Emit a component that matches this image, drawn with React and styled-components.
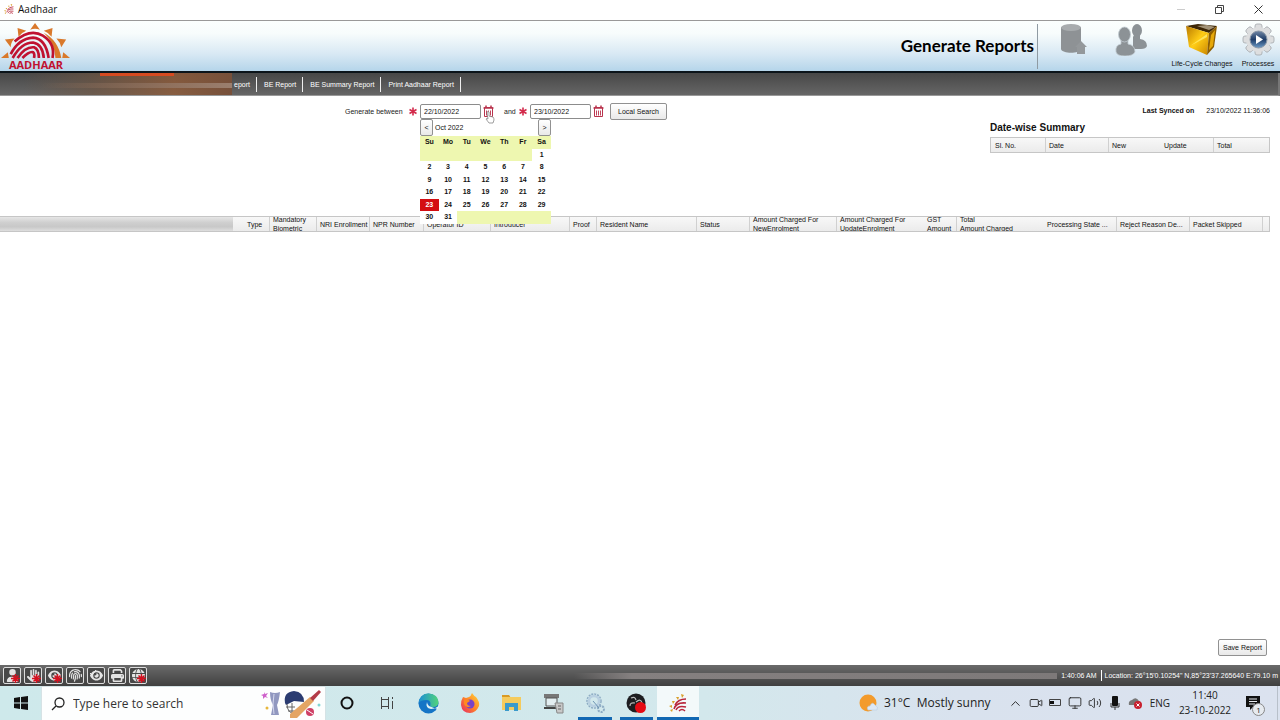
import React from "react";
import styled, { createGlobalStyle } from "styled-components";
import { Video, Monitor, Volume2, ChevronUp } from "lucide-react";
import {
  FaUser,
  FaHand,
  FaEye,
  FaFingerprint,
  FaPrint,
  FaGlobe,
} from "react-icons/fa6";

const GlobalStyle = createGlobalStyle`
  * {
    box-sizing: border-box;
  }
  body {
    margin: 0;
    background: #fff;
    color: #111;
    font-family: "Liberation Sans", Arial, sans-serif;
    font-size: 7px;
    line-height: 9px;
  }
  button, input {
    font: inherit;
    color: inherit;
    margin: 0;
    padding: 0;
  }
  a {
    color: inherit;
    text-decoration: none;
  }
  svg {
    display: block;
    flex: none;
  }
`;

const Page = styled.div`
  min-height: 100vh;
  display: flex;
  flex-direction: column;
`;

const TitleBar = styled.header`
  height: 21px;
  display: flex;
  align-items: center;
  gap: 4px;
  padding: 0 2px 2px 4px;
  border-bottom: 1px solid #999;
  font-family: "Open Sans", sans-serif;
  font-size: 10px;
  line-height: 14px;
`;

const WindowButtons = styled.div`
  margin-left: auto;
  display: flex;
`;

const WindowButton = styled.button`
  width: 39px;
  height: 18px;
  border: 0;
  background: none;
  display: flex;
  align-items: center;
  justify-content: center;
`;

const Banner = styled.div`
  height: 52px;
  display: flex;
  background: linear-gradient(#fbfffe 0%, #f7fcfc 25%, #d9e9f4 65%, #b5d5ea 100%);
  border-bottom: 2px solid #0c151b;
`;

const Logo = styled.div`
  width: 72px;
  padding-top: 2px;
  display: flex;
  flex-direction: column;
  align-items: center;
`;

const LogoName = styled.strong`
  font-family: "Open Sans", sans-serif;
  font-size: 11px;
  line-height: 11px;
  color: #c01230;
`;

const PageTitle = styled.h1`
  margin: 3px 0 0 auto;
  padding: 0 3px 0 0;
  height: 45px;
  border-right: 1px solid #8f9ba3;
  font-family: Lato, sans-serif;
  font-size: 17px;
  line-height: 44px;
  font-weight: 700;
  color: #000;
`;

const BannerMenu = styled.nav`
  display: flex;
  padding: 2px 3px 0 11px;
`;

const BannerItem = styled.button`
  width: ${(props) => props.$width}px;
  border: 0;
  background: none;
  display: flex;
  flex-direction: column;
  align-items: center;
  gap: 3px;
  white-space: nowrap;
  color: #111;
`;

const NavBar = styled.nav`
  height: 23px;
  display: flex;
  align-items: center;
  color: #fff;
  background: linear-gradient(#474747, #666);
  border-bottom: 1px solid #999;
  border-right: 2px solid #777;
`;

const HiddenTabs = styled.div`
  width: 232px;
  align-self: stretch;
  display: flex;
  flex-direction: column;
  background: linear-gradient(90deg, transparent 10%, #70543f99 40%, #905b38cc 75%, #77503a 100%);
`;

const ActiveMark = styled.div`
  width: 74px;
  height: 3px;
  margin-left: 100px;
  background: #d64a20;
`;

const Smear = styled.div`
  height: 5px;
  margin: 7px 0 0 40px;
  background: linear-gradient(90deg, transparent, #85695799 35%, #9b7f6e);
`;

const NavLink = styled.a`
  padding: 3px 6px 3px 7px;
  border-right: 1px solid #eee;
  white-space: nowrap;
  &:first-of-type {
    padding-left: 2px;
  }
`;

const Main = styled.main`
  flex: 1;
  display: flex;
  flex-direction: column;
`;

const SearchArea = styled.section`
  min-height: 120px;
  display: flex;
  justify-content: space-between;
  align-items: flex-start;
  padding: 7px 10px 0 345px;
`;

const Filters = styled.form`
  display: flex;
  align-items: center;
  gap: 3px;
  height: 16px;
`;

const Label = styled.label`
  display: flex;
  align-items: center;
  justify-content: space-between;
  width: ${(props) => props.$width}px;
  margin-left: ${(props) => props.$gap || 0}px;
  white-space: nowrap;
  color: #222;
`;

const DateField = styled.div`
  position: relative;
  display: flex;
  align-items: center;
  gap: 1px;
`;

const DateInput = styled.input`
  width: 61px;
  height: 15px;
  padding: 0 3px;
  border: 1px solid #8c8c8c;
  border-radius: 2px;
  background: #fff;
`;

const IconButton = styled.button`
  border: 0;
  background: none;
  width: 13px;
  height: 14px;
  display: flex;
  align-items: center;
  justify-content: center;
`;

const Button = styled.button`
  width: ${(props) => props.$width}px;
  height: 17px;
  margin-left: ${(props) => props.$gap || 0}px;
  border: 1px solid #919191;
  border-radius: 2px;
  background: linear-gradient(#fff, #e9e9e9);
  white-space: nowrap;
`;

const Popup = styled.div`
  position: absolute;
  top: 15px;
  left: 0;
  z-index: 2;
  width: 131px;
  background: #fff;
`;

const MonthBar = styled.div`
  height: 17px;
  display: flex;
  align-items: center;
  gap: 2px;
`;

const Month = styled.span`
  flex: 1;
`;

const Days = styled.table`
  width: 100%;
  height: 88px;
  table-layout: fixed;
  border-collapse: collapse;
  text-align: center;
  font-weight: 700;
  line-height: 8px;
  th, td {
    height: 12px;
    padding: 0;
  }
  th {
    height: 13px;
    background: #eef7b0;
  }
`;

const Day = styled.td`
  background: ${(props) =>
    props.$selected ? "#d40d12" : props.$empty ? "#eef7b0" : "#fff"};
  color: ${(props) => (props.$selected ? "#fff" : "#111")};
`;

const Pointer = styled.svg`
  position: absolute;
  left: 65px;
  top: 7px;
  z-index: 3;
`;

const Summary = styled.aside`
  width: 280px;
`;

const Synced = styled.div`
  display: flex;
  justify-content: flex-end;
  gap: 12px;
  padding-top: 3px;
`;

const SummaryTitle = styled.h2`
  margin: 5px 0 1px;
  font-size: 10px;
  line-height: 16px;
`;

const HeadTable = styled.table`
  width: 100%;
  table-layout: fixed;
  border-collapse: separate;
  border-spacing: 0;
  border: 1px solid #c6c6c6;
  border-left-width: ${(props) => (props.$flush ? 0 : 1)}px;
  background: linear-gradient(#f8f8f8, #ebebeb);
  th {
    padding: 0;
    text-align: left;
    font-weight: 400;
  }
`;

const HeadCell = styled.div`
  height: 14px;
  padding-left: 3px;
  border-left: 1px solid ${(props) => (props.$plain ? "transparent" : "#d0d0d0")};
  display: flex;
  align-items: center;
  overflow: hidden;
  white-space: pre;
`;

const HeadSmear = styled.div`
  width: 233px;
  height: 14px;
  background: linear-gradient(#e6e6e6, #cfcfcf 40%, #c8c8c8 70%, #dedede);
`;

const TableWrap = styled.section`
  padding-right: 10px;
`;

const Actions = styled.div`
  margin-top: auto;
  padding: 0 13px 9px;
  display: flex;
  justify-content: flex-end;
`;

const StatusBar = styled.footer`
  height: 21px;
  display: flex;
  align-items: center;
  padding: 0 2px 0 3px;
  color: #fff;
  background: linear-gradient(#6a6a6a, #404040);
`;

const Devices = styled.div`
  display: flex;
  gap: 3px;
`;

const Device = styled.button`
  position: relative;
  width: 18px;
  height: 17px;
  border: 1px solid #ddd;
  border-radius: 2px;
  background: #484848;
  display: flex;
  align-items: center;
  justify-content: center;
  color: #e4e4e4;
`;

const Mark = styled.svg`
  position: absolute;
  right: 0;
  bottom: 0;
`;

const StatusSmear = styled.div`
  flex: 1;
  height: 6px;
  margin: 0 4px 0 427px;
  background: linear-gradient(90deg, transparent, #858080 12%, #7d7979);
`;

const StatusText = styled.span`
  padding: 1px 4px 1px 0;
  white-space: nowrap;
  & + & {
    padding: 1px 0 1px 3px;
    border-left: 1px solid #fff;
  }
`;

const Taskbar = styled.footer`
  height: 34px;
  display: flex;
  background: linear-gradient(90deg, #cee9eb, #d3e8ec 55%, #d9e2ee 75%, #dbe2ef);
  font-family: "Open Sans", "Noto Sans", sans-serif;
  font-size: 12px;
  line-height: 16px;
  color: #222;
`;

const TaskButton = styled.button`
  width: ${(props) => props.$width}px;
  border: 0;
  background: none;
  display: flex;
  align-items: center;
  justify-content: center;
`;

const Search = styled.label`
  width: 285px;
  padding: 0 3px 0 9px;
  display: flex;
  align-items: center;
  gap: 8px;
  background: #fdfefe;
  border: 1px solid #d5e2e5;
  border-bottom: 0;
`;

const SearchInput = styled.input`
  flex: 1;
  min-width: 0;
  border: 0;
  background: none;
  &::placeholder {
    color: #333;
    opacity: 1;
  }
`;

const Apps = styled.div`
  width: 291px;
  margin-left: 1px;
  display: grid;
  grid-template-columns: repeat(7, 1fr);
`;

const AppButton = styled.button`
  border: 0;
  display: flex;
  align-items: center;
  justify-content: center;
  background: ${(props) => (props.$active ? "#f3f9fa" : "none")};
`;

const RunningApp = styled(AppButton)`
  margin: 0 ${(props) => (props.$active ? 0 : 4)}px;
  border-bottom: 3px solid #1268b3;
  padding-top: 3px;
`;

const Weather = styled.div`
  margin-left: auto;
  display: flex;
  align-items: center;
  gap: 6px;
  white-space: pre;
`;

const Tray = styled.div`
  display: flex;
  align-items: center;
  gap: 6px;
  margin: 0 7px 0 17px;
`;

const Language = styled.span`
  margin-left: 2px;
  font-size: 10px;
`;

const Clock = styled.div`
  width: 56px;
  padding-top: 2px;
  font-size: 10px;
  line-height: 15px;
  text-align: center;
`;

const Notices = styled.button`
  position: relative;
  width: 45px;
  padding-right: 5px;
  border: 0;
  border-right: 1px solid #b8c0ca;
  margin-right: 2px;
  background: none;
  display: flex;
  align-items: center;
  justify-content: center;
`;

const Badge = styled.span`
  position: absolute;
  right: 12px;
  bottom: 4px;
  width: 13px;
  height: 13px;
  border: 1px solid #888;
  border-radius: 50%;
  background: #e6eaef;
  font-size: 8px;
  line-height: 11px;
`;

const navItems = ["eport", "BE Report", "BE Summary Report", "Print Aadhaar Report"];

const weekDays = ["Su", "Mo", "Tu", "We", "Th", "Fr", "Sa"];

const weeks = [
  ["", "", "", "", "", "", 1],
  [2, 3, 4, 5, 6, 7, 8],
  [9, 10, 11, 12, 13, 14, 15],
  [16, 17, 18, 19, 20, 21, 22],
  [23, 24, 25, 26, 27, 28, 29],
  [30, 31, "", "", "", "", ""],
];

const summaryColumns = [
  { title: "Sl. No.", width: 54, plain: true },
  { title: "Date", width: 63 },
  { title: "New", width: 52 },
  { title: "Update", width: 53, plain: true },
  { title: "Total", width: 56 },
];

const reportColumns = [
  { title: "Type", width: 26, plain: true },
  { title: "Mandatory\nBiometric", width: 47 },
  { title: "NRI Enrollment", width: 53 },
  { title: "NPR Number", width: 54 },
  { title: "Operator ID", width: 67 },
  { title: "Introducer", width: 79 },
  { title: "Proof", width: 27 },
  { title: "Resident Name", width: 100 },
  { title: "Status", width: 53 },
  { title: "Amount Charged For\nNewEnrolment", width: 87 },
  { title: "Amount Charged For\nUpdateEnrolment", width: 87 },
  { title: "GST\nAmount", width: 33, plain: true },
  { title: "Total\nAmount Charged", width: 87 },
  { title: "Processing State ...", width: 73, plain: true },
  { title: "Reject Reason De...", width: 73 },
  { title: "Packet Skipped", width: 73 },
  { title: "", width: 7 },
];

const devices = [
  { name: "Camera", icon: FaUser, offline: true },
  { name: "Slap scanner", icon: FaHand, offline: true },
  { name: "Iris scanner", icon: FaEye, offline: true },
  { name: "Fingerprint", icon: FaFingerprint },
  { name: "Iris", icon: FaEye, check: true },
  { name: "Printer", icon: FaPrint },
  { name: "GPS", icon: FaGlobe, offline: true },
];

const SunLogo = () => (
  <svg width="70" height="36" viewBox="0 0 72 37">
    <g fill="#d9792b">
      <path d="M35 0l5 7q-5-2-10 0z" />
      <path d="M17 5l9 3q-5 2-8 6z" />
      <path d="M53 5l-9 3q5 2 8 6z" />
      <path d="M4 17l10-1q-4 4-4 9z" />
      <path d="M67 17l-10-1q4 4 5 9z" />
      <path d="M0 36l7-6 1 6z" />
      <path d="M71 36l-7-6-1 6z" />
      <path d="M44 10q15 8 18 26h-6Q55 20 44 10z" />
    </g>
    <g fill="none" stroke="#c01230" strokeWidth="2.7">
      <path d="M14 19Q30 5 43 13T53 36" />
      <path d="M10 32Q18 16 33 15Q46 16 49 36" />
      <path d="M12 36Q21 20 33 20Q43 22 44 36" />
      <path d="M17 36Q25 24 34 25Q39 27 39 36" />
      <path d="M22 36Q29 29 33 30Q35 32 34 36" />
    </g>
  </svg>
);

const AppIcon = ({ size }) => (
  <svg width={size} height={size} viewBox="0 0 18 18">
    <g fill="#d9a02b">
      <path d="M12 0l3 1-2 3zM7 3l3 0-1 3zM3 7h3l-2 3zM0 12l3-1v3zM1 16l3-1-1 3z" />
    </g>
    <g fill="none" stroke="#b8263c" strokeWidth="1.5">
      <path d="M6 11Q9 5 17 5" />
      <path d="M5 15Q7 8 17 9" />
      <path d="M7 16Q9 11 17 13" />
      <path d="M10 17Q13 14 16 17" />
    </g>
  </svg>
);

const Star = () => (
  <svg
    width="8"
    height="9"
    viewBox="0 0 8 9"
    stroke="#d32a4b"
    strokeWidth="1.6"
    aria-hidden="true"
  >
    <path d="M4 0.5v8M0.5 2.5l7 4M7.5 2.5l-7 4" />
  </svg>
);

const CalendarIcon = () => (
  <svg width="11" height="12" viewBox="0 0 11 12" fill="none" stroke="#b9324c">
    <path d="M1.5 2.5h8v9h-8z" />
    <path d="M0.5 3h10M3 0.5v2M8 0.5v2" strokeWidth="1.5" />
    <path d="M3.5 5.5v5M5.5 5.5v5M7.5 5.5v5" strokeWidth="0.9" />
  </svg>
);

const DatabaseIcon = () => (
  <svg width="32" height="33" viewBox="0 0 32 33">
    <path d="M4 4v22c1 5 19 5 20 0V4z" fill="#8e9295" />
    <ellipse cx="14" cy="4.500" rx="10" ry="3.500" fill="#a8acae" />
    <path d="M18 24l6-6 6 6h-2v7h-8v-7z" fill="#94989b" />
  </svg>
);

const PeopleIcon = () => (
  <svg width="34" height="33" viewBox="0 0 34 33" fill="#8c9296">
    <ellipse cx="23" cy="7.500" rx="5" ry="6.500" />
    <path d="M20 12h6v4q7 1 7 7-1 3-6 3h-8V14z" />
    <g stroke="#c3cdd3" strokeWidth="0.8">
      <path d="M7 17h7v4q7 1 7 8-2 4-10 4t-9-4q-1-7 5-8z" />
      <ellipse cx="10.500" cy="11.500" rx="6" ry="7.500" />
    </g>
  </svg>
);

const CubeIcon = () => (
  <svg width="34" height="33" viewBox="0 0 34 33">
    <defs>
      <linearGradient id="cube" x1="0" y1="0" x2="1" y2="1">
        <stop offset="0" stopColor="#b97a00" />
        <stop offset="0.5" stopColor="#ffcc15" />
        <stop offset="1" stopColor="#c98400" />
      </linearGradient>
    </defs>
    <path d="M1 3L13 1l19 2-8 7z" fill="#3c2605" />
    <path d="M12 3l10-1 8 2-6 3z" fill="#a29377" />
    <path d="M1 3l23 7-2 22L4 24z" fill="url(#cube)" />
    <path d="M24 10l8-7-3 21-7 8z" fill="#8e5e00" />
    <path d="M26 12l4-5-2 16-4 4z" fill="#e6a80a" />
    <path d="M5 23l17-12v3z" fill="#ffe45b" />
  </svg>
);

const GearIcon = () => (
  <svg width="33" height="33" viewBox="0 0 33 33">
    <defs>
      <linearGradient id="lens" x1="0" y1="0" x2="0" y2="1">
        <stop offset="0" stopColor="#7187a5" />
        <stop offset="0.5" stopColor="#1f3d68" />
        <stop offset="1" stopColor="#6e9cc8" />
      </linearGradient>
    </defs>
    <g fill="#dddedf" stroke="#a3a8ac" strokeWidth="0.8">
      {[0, 45, 90, 135].map((angle) => (
        <rect
          key={angle}
          x="13"
          y="1"
          width="7"
          height="31"
          rx="2"
          transform={`rotate(${angle} 16.5 16.5)`}
        />
      ))}
    </g>
    <circle cx="16.500" cy="16.500" r="12.500" fill="#dddedf" />
    <circle cx="16.500" cy="16.500" r="8.500" fill="url(#lens)" stroke="#8b97a6" />
    <path d="M14 12l7 4.500-7 4.500z" fill="#fff" />
  </svg>
);

const FestiveArt = () => (
  <svg width="62" height="30" viewBox="0 0 62 30">
    <path d="M4 3l1 2 3-1-2 3 2 2-3-1-2 2v-3l-2-1 3-1z" fill="#cf62cb" />
    <circle cx="7" cy="19" r="1.500" fill="#e7b73c" />
    <path d="M10 3q5 2 10 0-1 9-3 13l2 10h-8l2-10q-3-5-3-13z" fill="#9198c0" />
    <path d="M14 5l-1 10 1 10" stroke="#d5d8ee" fill="none" />
    <path d="M25 14Q23 3 34 2q10 1 10 11l-10-1-8 4z" fill="#2b3c71" />
    <path d="M27 15q0 9 8 10M26 18h9M28 22h8M32 14v10" stroke="#666" fill="none" />
    <path d="M30 25L50 8l4 4-17 17h-7z" fill="#e4a564" />
    <path d="M50 9l9-8 2 2-8 9z" fill="#b33b48" />
    <circle cx="50" cy="23" r="4" fill="#cf4066" />
    <path d="M47 21l6 4" stroke="#fff" />
    <circle cx="59" cy="16" r="1.500" fill="#7fd6d3" />
  </svg>
);

const EdgeIcon = () => (
  <svg width="21" height="21" viewBox="0 0 21 21">
    <defs>
      <linearGradient id="edge" x1="0" y1="0" x2="1" y2="0">
        <stop offset="0" stopColor="#1b8ed6" />
        <stop offset="1" stopColor="#52d47a" />
      </linearGradient>
    </defs>
    <circle cx="10.500" cy="10.500" r="10" fill="#1575c6" />
    <path d="M0.500 10Q2 0.500 10.500 0.500 20 1 20.500 9q0 5-6 5-3 0-2-3 0-4-4-4-6 0-8 3z" fill="url(#edge)" />
    <path d="M9 9q-2 6 4 7 4 0 6-2l2-1-1 3-4-1-5-2q-2-2-2-4z" fill="#e2f3f4" />
  </svg>
);

const FirefoxIcon = () => (
  <svg width="20" height="20" viewBox="0 0 20 20">
    <defs>
      <linearGradient id="fox" x1="1" y1="0" x2="0" y2="1">
        <stop offset="0" stopColor="#ffdc3d" />
        <stop offset="0.5" stopColor="#ff8427" />
        <stop offset="1" stopColor="#e52669" />
      </linearGradient>
    </defs>
    <path d="M3 4l3 1 3-1Q11 3 12 0q2 3 4 4 4 5 3 9-3 7-9 7-8 0-9-8 0-5 2-8z" fill="url(#fox)" />
    <circle cx="10" cy="11" r="4.500" fill="#7942c8" />
    <path d="M4 7q4-2 6 1l-3 2q0 3 4 3-5 3-7-2z" fill="#ff8a22" />
  </svg>
);

const FolderIcon = () => (
  <svg width="19" height="18" viewBox="0 0 19 18">
    <path d="M0 1h7l2 3H0z" fill="#d99a24" />
    <path d="M0 3h19v13H0z" fill="#f5cb5d" />
    <path d="M3 17V9h13v8h-4v-4H7v4z" fill="#3b9acb" />
  </svg>
);

const ScannerIcon = () => (
  <svg width="21" height="21" viewBox="0 0 21 21">
    <path d="M1 1h15v4H1z" fill="#777" />
    <path d="M3 5h11v8H3z" fill="#e3eef1" stroke="#555" />
    <path d="M1 14h15v2H1z" fill="#444" />
    <path d="M12 10h8v10h-6z" fill="#c8c8c8" stroke="#888" />
    <path d="M15 13h3M15 16h3" stroke="#666" />
  </svg>
);

const CogsIcon = () => (
  <svg width="21" height="21" viewBox="0 0 21 21" fill="none" stroke="#8eacc4">
    <circle cx="9" cy="8" r="7" strokeWidth="1.500" strokeDasharray="2 1" />
    <circle cx="9" cy="8" r="5" stroke="#b9d0e1" strokeWidth="2.500" />
    <circle cx="16" cy="16" r="3" strokeWidth="2" strokeDasharray="2 1" />
    <path d="M8 8l6 7" stroke="#6f95b3" />
  </svg>
);

const RecorderIcon = () => (
  <svg width="21" height="21" viewBox="0 0 21 21">
    <circle cx="10" cy="10" r="9.500" fill="#1d1d20" />
    <path d="M5 5q4-2 5 2M4 13q0-4 5-3M10 9q5-4 6 1" stroke="#bbb" fill="none" strokeWidth="1.200" />
    <circle cx="14.500" cy="14.500" r="5.500" fill="#e60a13" />
  </svg>
);

const WeatherIcon = () => (
  <svg width="19" height="18" viewBox="0 0 19 18">
    <circle cx="9" cy="9" r="8.500" fill="#f39b2c" />
    <path d="M9 16q-2-4 2-4 2-5 5-1 4 2 2 5z" fill="#dce8f5" stroke="#b9cde0" strokeWidth="0.6" />
  </svg>
);

const Calendar = () => (
  <Popup>
    <MonthBar>
      <Button type="button" $width={13} aria-label="Previous month">
        &lt;
      </Button>
      <Month>Oct 2022</Month>
      <Button type="button" $width={13} aria-label="Next month">
        &gt;
      </Button>
    </MonthBar>
    <Days>
      <thead>
        <tr>
          {weekDays.map((day) => (
            <th key={day}>{day}</th>
          ))}
        </tr>
      </thead>
      <tbody>
        {weeks.map((week, row) => (
          <tr key={row}>
            {week.map((day, index) => (
              <Day key={index} $selected={day === 23} $empty={day === ""}>
                {day}
              </Day>
            ))}
          </tr>
        ))}
      </tbody>
    </Days>
  </Popup>
);

const ColumnHeads = ({ columns }) =>
  columns.map((column) => (
    <th key={column.title + column.width} scope="col">
      <HeadCell $plain={column.plain}>{column.title}</HeadCell>
    </th>
  ));

const Columns = ({ columns }) =>
  columns.map((column, index) => <col key={index} width={column.width} />);

const App = () => (
  <Page>
    <GlobalStyle />
    <TitleBar>
      <AppIcon size={10} />
      <span>Aadhaar</span>
      <WindowButtons>
        <WindowButton aria-label="Minimize">
          <svg width="8" height="8" stroke="#ccc">
            <path d="M0 4.500h8" />
          </svg>
        </WindowButton>
        <WindowButton aria-label="Restore">
          <svg width="9" height="9" fill="none" stroke="#444">
            <path d="M0.500 2.500h6v6h-6zM2.500 2.500v-2h6v6h-2" />
          </svg>
        </WindowButton>
        <WindowButton aria-label="Close">
          <svg width="9" height="9" stroke="#333">
            <path d="M0.500 0.500l8 8M8.500 0.500l-8 8" />
          </svg>
        </WindowButton>
      </WindowButtons>
    </TitleBar>

    <Banner>
      <Logo>
        <SunLogo />
        <LogoName>AADHAAR</LogoName>
      </Logo>
      <PageTitle>Generate Reports</PageTitle>
      <BannerMenu>
        <BannerItem $width={48} disabled aria-label="Enrolment">
          <DatabaseIcon />
        </BannerItem>
        <BannerItem $width={68} disabled aria-label="Operators">
          <PeopleIcon />
        </BannerItem>
        <BannerItem $width={74}>
          <CubeIcon />
          Life-Cycle Changes
        </BannerItem>
        <BannerItem $width={38}>
          <GearIcon />
          Processes
        </BannerItem>
      </BannerMenu>
    </Banner>

    <NavBar>
      <HiddenTabs>
        <ActiveMark />
        <Smear />
      </HiddenTabs>
      {navItems.map((item) => (
        <NavLink key={item} href="#">
          {item}
        </NavLink>
      ))}
    </NavBar>

    <Main>
      <SearchArea>
        <Filters>
          <Label htmlFor="from" $width={72}>
            Generate between <Star />
          </Label>
          <DateField>
            <DateInput id="from" defaultValue="22/10/2022" />
            <IconButton type="button" aria-label="Pick start date">
              <CalendarIcon />
            </IconButton>
            <Calendar />
            <Pointer width="10" height="13" viewBox="0 0 10 13">
              <path
                d="M2 1q1-1 2 0v4l4 1q1 1 1 3l-1 3H4L1 8q0-1 2 0z"
                fill="#fff"
                stroke="#777"
                strokeWidth="0.7"
              />
            </Pointer>
          </DateField>
          <Label htmlFor="to" $width={23} $gap={6}>
            and <Star />
          </Label>
          <DateField>
            <DateInput id="to" defaultValue="23/10/2022" />
            <IconButton type="button" aria-label="Pick end date">
              <CalendarIcon />
            </IconButton>
          </DateField>
          <Button type="button" $width={57} $gap={2}>
            Local Search
          </Button>
        </Filters>
        <Summary>
          <Synced>
            <strong>Last Synced on</strong>
            <span>23/10/2022 11:36:06</span>
          </Synced>
          <SummaryTitle>Date-wise Summary</SummaryTitle>
          <HeadTable>
            <colgroup>
              <Columns columns={summaryColumns} />
            </colgroup>
            <thead>
              <tr>
                <ColumnHeads columns={summaryColumns} />
              </tr>
            </thead>
          </HeadTable>
        </Summary>
      </SearchArea>

      <TableWrap>
        <HeadTable $flush>
          <colgroup>
            <col width={243} />
            <Columns columns={reportColumns} />
          </colgroup>
          <thead>
            <tr>
              <th>
                <HeadSmear />
              </th>
              <ColumnHeads columns={reportColumns} />
            </tr>
          </thead>
        </HeadTable>
      </TableWrap>

      <Actions>
        <Button type="button" $width={49}>
          Save Report
        </Button>
      </Actions>
    </Main>

    <StatusBar>
      <Devices>
        {devices.map(({ name, icon: Icon, offline, check }) => (
          <Device key={name} aria-label={name}>
            <Icon size={13} />
            {offline && (
              <Mark width="9" height="9" viewBox="0 0 9 9" stroke="#d31120" strokeWidth="1.5">
                <path d="M4.500 0v9M0 4.500h9M1.500 1.500l6 6M7.500 1.500l-6 6" />
              </Mark>
            )}
            {check && (
              <Mark width="16" height="14" viewBox="0 0 16 14" stroke="#eee" fill="none">
                <path d="M2 4l2 2 4-5" />
              </Mark>
            )}
          </Device>
        ))}
      </Devices>
      <StatusSmear />
      <StatusText>1:40:06 AM</StatusText>
      <StatusText>Location: 26°15'0.10254" N,85°23'37.265640 E:79.10 m</StatusText>
    </StatusBar>

    <Taskbar>
      <TaskButton $width={41} aria-label="Start">
        <svg width="14" height="14" viewBox="0 0 14 14" fill="#111">
          <path d="M0 2l6-1v5.500H0zM7 1l7-1v6.500H7zM0 7.500h6V13l-6-1zM7 7.500h7V14l-7-1z" />
        </svg>
      </TaskButton>
      <Search>
        <svg width="14" height="14" fill="none" stroke="#222" strokeWidth="1.300">
          <circle cx="8.500" cy="5.500" r="4.500" />
          <path d="M5 9l-4 4" />
        </svg>
        <SearchInput placeholder="Type here to search" aria-label="Type here to search" />
        <FestiveArt />
      </Search>
      <TaskButton $width={41} aria-label="Cortana">
        <svg width="14" height="14" fill="none" stroke="#111" strokeWidth="2">
          <circle cx="7" cy="7" r="5.500" />
        </svg>
      </TaskButton>
      <TaskButton $width={40} aria-label="Task view">
        <svg width="14" height="14" fill="none" stroke="#444">
          <path d="M1.500 1v2.500h7V1M1.500 13v-2.500h7V13M1.500 3v8M8.500 3v8M12.500 1v2M12.500 5v8" />
        </svg>
      </TaskButton>
      <Apps>
        <AppButton aria-label="Edge">
          <EdgeIcon />
        </AppButton>
        <AppButton aria-label="Firefox">
          <FirefoxIcon />
        </AppButton>
        <AppButton aria-label="File Explorer">
          <FolderIcon />
        </AppButton>
        <AppButton aria-label="Scanner">
          <ScannerIcon />
        </AppButton>
        <RunningApp aria-label="Services">
          <CogsIcon />
        </RunningApp>
        <RunningApp aria-label="Recorder">
          <RecorderIcon />
        </RunningApp>
        <RunningApp $active aria-label="Aadhaar">
          <AppIcon size={18} />
        </RunningApp>
      </Apps>
      <Weather>
        <WeatherIcon />
        <span>31°C  Mostly sunny</span>
      </Weather>
      <Tray>
        <ChevronUp size={15} strokeWidth={1.5} />
        <Video size={14} strokeWidth={1.5} />
        <svg width="13" height="8" fill="none" stroke="#444">
          <path d="M0.500 0.500h11v6h-11z" />
          <path d="M1 2h4v3H1z" fill="#111" stroke="none" />
        </svg>
        <Monitor size={14} strokeWidth={1.5} />
        <Volume2 size={14} strokeWidth={1.5} />
        <svg width="14" height="14" viewBox="0 0 14 14">
          <rect x="4" y="0" width="6" height="10" rx="1" fill="#111" />
          <path d="M3 7v4h8V7M7 11v3" fill="none" stroke="#333" />
        </svg>
        <svg width="14" height="12" viewBox="0 0 14 12">
          <path d="M1 8q-1-4 3-5 4-4 7 1 3 1 2 4z" fill="#777" />
          <circle cx="10" cy="8" r="4" fill="#c8202f" />
          <path d="M8.500 6.500l3 3M11.500 6.500l-3 3" stroke="#fff" />
        </svg>
        <Language>ENG</Language>
      </Tray>
      <Clock>
        <div>11:40</div>
        <div>23-10-2022</div>
      </Clock>
      <Notices aria-label="Notifications">
        <svg width="14" height="14" viewBox="0 0 14 14">
          <path d="M0 0h14v11H7l-3 3v-3H0z" fill="#111" />
          <path d="M3 3h8M3 5.500h8M3 8h6" stroke="#e6eaef" />
        </svg>
        <Badge>1</Badge>
      </Notices>
    </Taskbar>
  </Page>
);

export default App;
